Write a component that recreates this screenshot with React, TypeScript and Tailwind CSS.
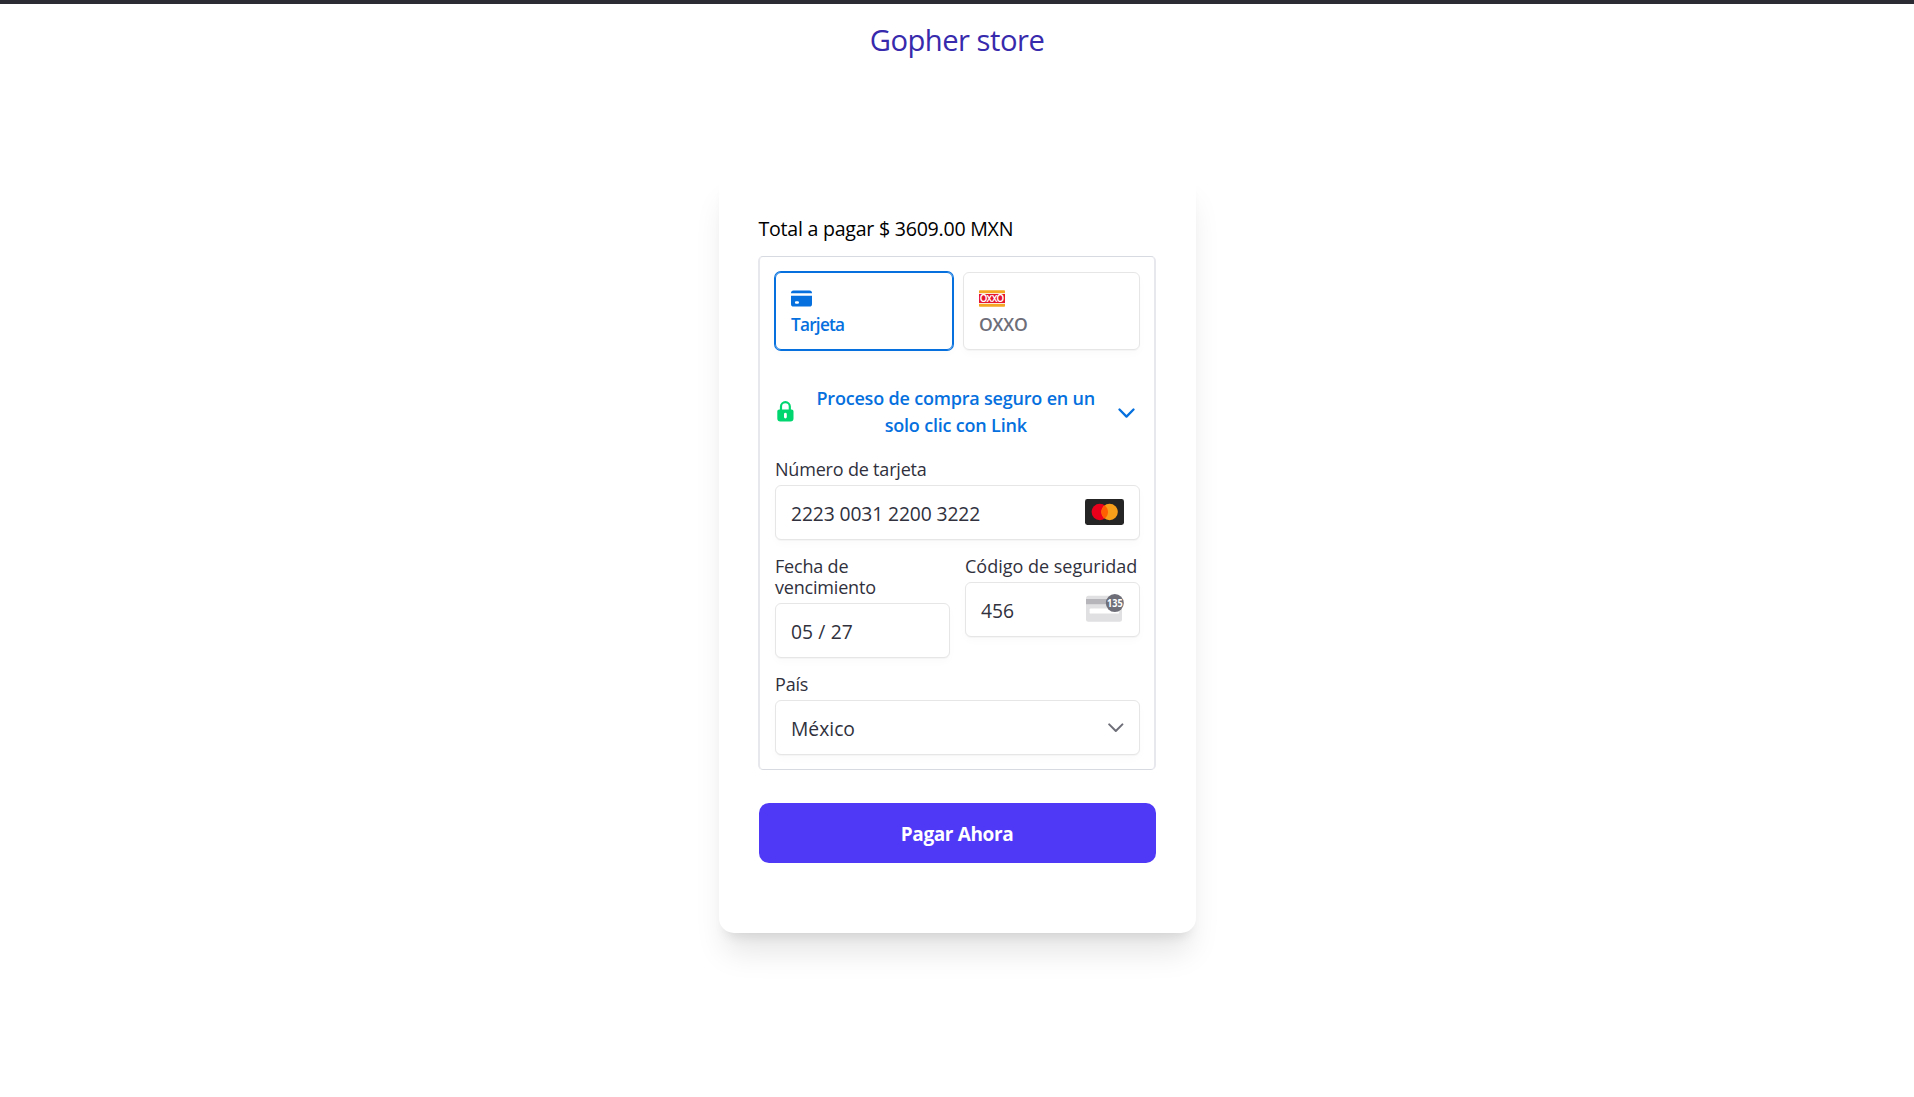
import type { ReactNode } from "react";

function CardIcon() {
  return (
    <svg className="block h-[17px] w-[21px]" viewBox="0 0 21 17">
      <path d="M2.5 0.5H18.5A2.5 2.5 0 0 1 21 3V3.2H0V3A2.5 2.5 0 0 1 2.5 0.5Z" fill="#0570de" />
      <path
        fillRule="evenodd"
        d="M0 5.8H21V14A2.6 2.6 0 0 1 18.4 16.6H2.6A2.6 2.6 0 0 1 0 14ZM5.2 11.2A1.3 1.3 0 0 0 5.2 13.8H6.7A1.3 1.3 0 0 0 6.7 11.2Z"
        fill="#0570de"
      />
    </svg>
  );
}

function OxxoIcon() {
  return (
    <svg className="block h-[17px] w-[26px] overflow-visible" viewBox="0 0 26 17">
      <rect y="0.3" width="26" height="16.4" rx="0.8" fill="#f5a623" />
      <rect y="3" width="26" height="11" fill="#fbe9d5" />
      <rect y="4" width="26" height="9" fill="#e5142f" />
      <text fill="#fff" fontFamily="Inter, sans-serif" fontWeight="600" textAnchor="middle">
        <tspan x="4.7" y="12.1" fontSize="10">O</tspan>
        <tspan x="10.4" y="11.7" fontSize="8.6">X</tspan>
        <tspan x="15.6" y="11.7" fontSize="8.6">X</tspan>
        <tspan x="21.3" y="12.1" fontSize="10">O</tspan>
      </text>
    </svg>
  );
}

function LockIcon() {
  return (
    <svg className="block h-[21px] w-[17px] -translate-y-px" viewBox="0 0 17 21">
      <path d="M4 9.5V5.6A4.4 4.4 0 0 1 12.8 5.6V9.5" fill="none" stroke="#00d66f" strokeWidth="2.2" />
      <path
        fillRule="evenodd"
        d="M2.2 8.4H14.6A1.9 1.9 0 0 1 16.5 10.3V17.4A3 3 0 0 1 13.5 20.4H3.3A3 3 0 0 1 0.3 17.4V10.3A1.9 1.9 0 0 1 2.2 8.4ZM7 13.2V16A1.4 1.4 0 0 0 9.8 16V13.2A1.4 1.4 0 0 0 7 13.2Z"
        fill="#00d66f"
      />
    </svg>
  );
}

function MastercardIcon() {
  return (
    <svg className="block h-[26px] w-[39px]" viewBox="0 0 39 26">
      <rect width="39" height="26" rx="2.4" fill="#252525" />
      <circle cx="14.8" cy="13" r="8.2" fill="#eb001b" />
      <circle cx="24.6" cy="13" r="8.2" fill="#f79e1b" />
      <path d="M19.7 6.43A8.2 8.2 0 0 1 19.7 19.57A8.2 8.2 0 0 1 19.7 6.43Z" fill="#ff5f00" />
    </svg>
  );
}

function CvcIcon() {
  return (
    <svg className="block h-[28px] w-[38px] -translate-y-px" viewBox="0 0 38 28">
      <rect y="1.7" width="36" height="26" rx="2.5" fill="#e0e0e2" />
      <rect y="5" width="36" height="5.2" fill="#b5b5ba" />
      <rect x="3.6" y="14.4" width="29.5" height="5.2" rx="1.2" fill="#fff" />
      <circle cx="28.8" cy="9.1" r="9" fill="#6d6e78" />
      <text
        x="21"
        y="12.8"
        textLength="15.6"
        lengthAdjust="spacingAndGlyphs"
        fill="#fff"
        fontFamily="Open Sans, sans-serif"
        fontSize="10.2"
        fontWeight="700"
      >
        135
      </text>
    </svg>
  );
}

function Field({ label, children }: { label: ReactNode; children: ReactNode }) {
  return (
    <label className="block">
      <span className="block translate-y-px text-[18px] leading-[21.5px] tracking-[-0.19px]">{label}</span>
      <span className="mt-[5.3px] flex h-[55px] items-center justify-between rounded-[6px] border border-[#e6e6e6] bg-white px-[15px] text-[19.3px] shadow-[0_1px_1px_rgba(0,0,0,0.03),0_4px_8px_rgba(0,0,0,0.02)]">
        {children}
      </span>
    </label>
  );
}

export default function App() {
  return (
    <div className="flex min-h-[1097px] flex-col bg-white font-['Open_Sans','Noto_Sans',sans-serif]">
      <div className="h-1 bg-[#2b2c33]" />
      <header className="h-[168px] pt-[14px] text-center">
        <h1 className="text-[29.2px] leading-[45px] tracking-[-0.5px] text-[#372aac]">Gopher store</h1>
      </header>

      <main className="mx-auto h-[761px] w-[477px] rounded-[15px] bg-white px-[39.5px] pt-[42px] shadow-[0_25px_31px_-6px_rgba(0,0,0,0.1),0_10px_12px_-7px_rgba(0,0,0,0.1)]">
        <p className="pl-[0.5px] text-[19.6px] leading-[30px] tracking-[-0.25px] text-black">Total a pagar $ 3609.00 MXN</p>

        <section className="mt-[12px] h-[514px] rounded-[5px] border-x-2 border-y border-x-[#e7e7ee] border-y-[#d7dbe1] pt-[15px] pr-[14px] pl-[15px] text-[#30313d]">
          <div className="grid grid-cols-[178px_177px] gap-[10px]">
            <button className="flex h-[78px] flex-col items-start rounded-[6px] border border-[#0570de] px-[15px] pt-[17px] text-[#0570de] shadow-[0_0_0_1px_#0570de,0_4px_8px_rgba(0,0,0,0.02)]">
              <CardIcon />
              <span className="mt-[6px] block text-[17.2px] leading-[23px] font-semibold tracking-[-0.75px]">Tarjeta</span>
            </button>
            <button className="flex h-[78px] flex-col items-start rounded-[6px] border border-[#e6e6e6] px-[15px] pt-[17px] text-[#6d6e78] shadow-[0_1px_1px_rgba(0,0,0,0.03),0_4px_8px_rgba(0,0,0,0.02)]">
              <OxxoIcon />
              <span className="mt-[6px] block text-[17.5px] leading-[23px] font-semibold tracking-[-0.2px]">OXXO</span>
            </button>
          </div>

          <button className="mt-[35px] flex w-full items-center justify-between pr-[5px] pl-[1.5px] text-[#0570de]">
            <LockIcon />
            <span className="w-[290px] text-center text-[18px] leading-[27px] font-semibold tracking-[-0.19px]">
              Proceso de compra seguro en un solo clic con Link
            </span>
            <svg className="block h-[11px] w-[17px] translate-y-px" viewBox="0 0 17 11">
              <path d="M1.5 1.5L8.5 8.6L15.5 1.5" fill="none" stroke="#0570de" strokeWidth="2.3" strokeLinecap="round" strokeLinejoin="round" />
            </svg>
          </button>

          <div className="mt-[19.2px] flex flex-col gap-[15px]">
            <Field label="Número de tarjeta">
              <span className="translate-y-[2px] tracking-[-0.12px]">2223 0031 2200 3222</span>
              <MastercardIcon />
            </Field>

            <div className="grid grid-cols-2 items-start gap-[15px]">
              <Field label="Fecha de vencimiento">
                <span className="translate-y-[2px] tracking-[0.1px]">05 / 27</span>
              </Field>
              <Field label={<span className="whitespace-nowrap tracking-normal">Código de seguridad</span>}>
                <span className="translate-y-[2px]">456</span>
                <CvcIcon />
              </Field>
            </div>

            <Field label="País">
              <span className="translate-y-[2px]">México</span>
              <svg className="block h-[10px] w-[17px]" viewBox="0 0 17 10">
                <path d="M2.2 1.4L8.8 8L15.4 1.4" fill="none" stroke="#6d6e78" strokeWidth="2" strokeLinecap="round" strokeLinejoin="round" />
              </svg>
            </Field>
          </div>
        </section>

        <div className="mt-[33px] px-[0.5px]">
          <button className="flex h-[60px] w-full items-center justify-center rounded-[10px] bg-[#4f39f6] pt-[2px] text-[19px] font-bold tracking-[-0.38px] text-white">
            Pagar Ahora
          </button>
        </div>
      </main>
    </div>
  );
}
